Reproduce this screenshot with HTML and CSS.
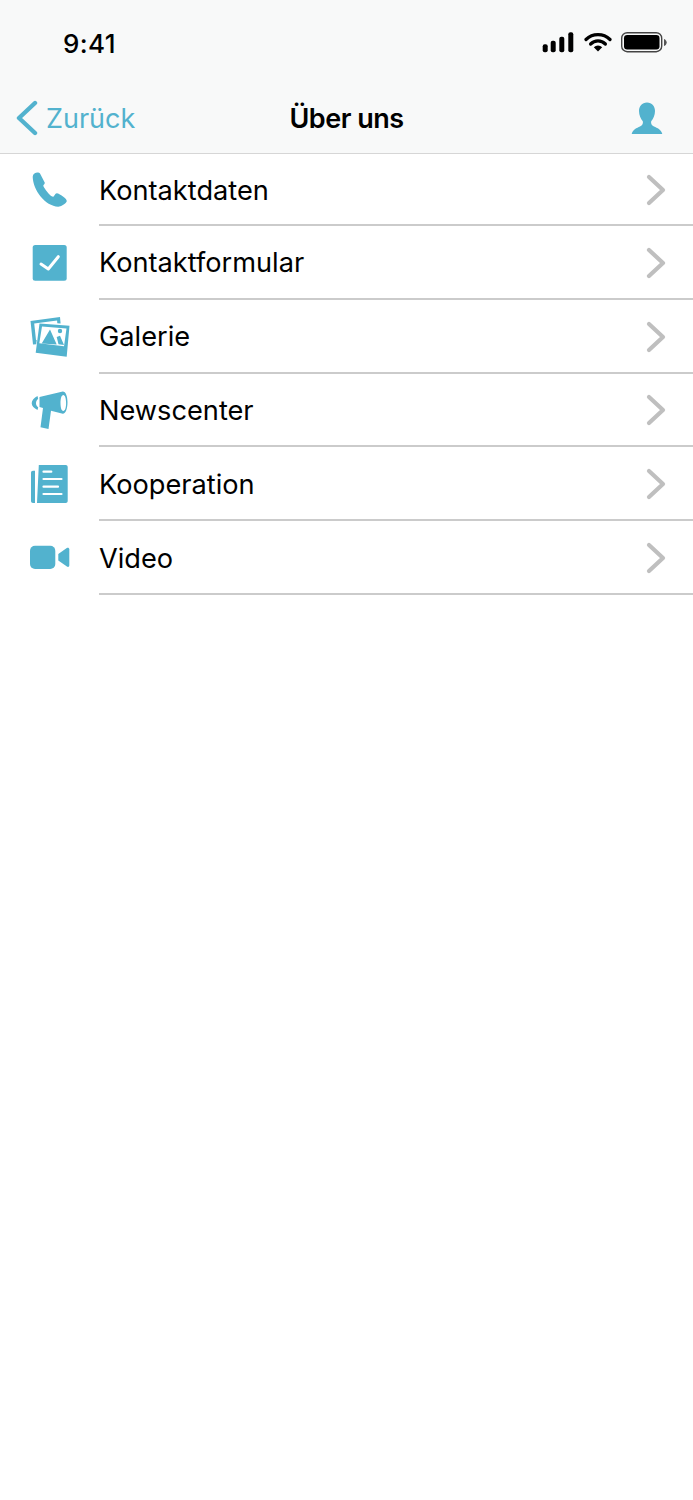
FILE: index.html
```html
<!DOCTYPE html>
<html lang="de">
<head>
    <meta charset="UTF-8">
    <title>Über uns</title>
    <link rel="stylesheet" href="styles.css">
</head>
<body>
    <header class="top">
        <div class="status">
            <span class="time">9:41</span>
            <div class="status-icons">
                <svg class="signal" viewBox="0 0 32 21" width="32" height="21">
                    <rect x="0.7" y="12.3" width="5" height="8" rx="2"/>
                    <rect x="8.7" y="8.7" width="5" height="11.6" rx="2"/>
                    <rect x="17.3" y="4.7" width="5" height="15.6" rx="2"/>
                    <rect x="26.3" y="0.3" width="5" height="20" rx="2"/>
                </svg>
                <svg class="wifi" viewBox="0 0 28 20" width="28" height="20">
                    <path d="M2 7.5a17 17 0 0 1 24 0" fill="none" stroke="#000" stroke-width="3.2" stroke-linecap="round"/>
                    <path d="M6.6 12a10.5 10.5 0 0 1 14.8 0" fill="none" stroke="#000" stroke-width="3.2" stroke-linecap="round"/>
                    <path d="M9.8 15.2a6 6 0 0 1 8.4 0L14 19.4z"/>
                </svg>
                <svg class="battery" viewBox="0 0 46 21" width="46" height="21">
                    <rect x="0.7" y="0.7" width="40" height="19" rx="5.5" fill="none" stroke="#444" stroke-width="1.4"/>
                    <rect x="3" y="3" width="35.5" height="14.5" rx="3.2"/>
                    <path d="M43 7v7c1.6-.5 2.700-2 2.700-3.500S44.600 7.500 43 7z" fill="#555"/>
                </svg>
            </div>
        </div>
        <nav class="nav">
            <a class="back" href="#">
                <svg viewBox="0 0 22 36" width="22" height="36">
                    <path d="M19 3 3 18l16 15" fill="none" stroke="#52b2ce" stroke-width="4.4" stroke-linecap="round" stroke-linejoin="round"/>
                </svg>
                <span>Zurück</span>
            </a>
            <h1 class="title">Über uns</h1>
            <a class="profile" href="#">
                <svg viewBox="0 0 32 33" width="32" height="33">
                    <path d="M16 .5c5 0 8 3.800 8 8.500 0 4-1.700 8-3.800 10.200-.5 2.300.2 4 2.800 5.300 3.300 1.600 7 2.600 8.300 7.500H.7c1.300-4.900 5-5.900 8.300-7.500 2.600-1.300 3.300-3 2.800-5.300C9.700 17 8 13 8 9c0-4.700 3-8.500 8-8.500z"/>
                </svg>
            </a>
        </nav>
    </header>

    <ul class="menu">
        <li class="row">
            <svg class="icon" viewBox="0 0 40 40" width="40" height="40">
                <path d="M2.700 6.700C3 20 15 36 28.300 36.700c2.500 0 7-2.500 8.400-5.200.4-1.500-1-3-3.400-4.800-2-1.500-5-3.400-6.600-3.400-1.500 0-2.500 3.400-3.400 3.400-1.500 0-3.500-1.500-5-3.400-1.800-2.200-5-6.500-5-7.500 0-1 1.500-1.500 1.500-3C12.300 8 11 5 10 3.500 8.500 1.500 3 2.500 2.700 6.700z"/>
            </svg>
            <span class="label">Kontaktdaten</span>
            <svg class="chev" viewBox="0 0 20 32" width="20" height="32"><path d="M3 3l14 13L3 29"/></svg>
        </li>
        <li class="row">
            <svg class="icon" viewBox="0 0 40 40" width="40" height="40">
                <rect x="2.7" y="2" width="34" height="35.7" rx="2.5"/>
                <path d="M11 21l7.300 5 10-12.300" fill="none" stroke="#fff" stroke-width="3" stroke-linecap="round" stroke-linejoin="round"/>
            </svg>
            <span class="label">Kontaktformular</span>
            <svg class="chev" viewBox="0 0 20 32" width="20" height="32"><path d="M3 3l14 13L3 29"/></svg>
        </li>
        <li class="row">
            <svg class="icon" viewBox="0 0 40 41" width="40" height="41">
                <path d="M.5 5 30 1l.6 6.500-3.300-.2-.2-2.900L4.200 7.400 6 24l.7-.1-.5 4.300-3.200.4z"/>
                <path fill-rule="evenodd" d="M9.500 7.500l30 2.300-2.800 31L5.700 36.700zM12 10.500l-2.700 16.800 24.700 3 2.500-17.800z"/>
                <path d="M11.700 27.500l8.300-14 6.700 15zM26.700 21l3.300-1.300 4 9.300-5.500-.7zM32.200 15a2.200 2.200 0 1 1-4.400 0 2.200 2.200 0 0 1 4.400 0z"/>
            </svg>
            <span class="label">Galerie</span>
            <svg class="chev" viewBox="0 0 20 32" width="20" height="32"><path d="M3 3l14 13L3 29"/></svg>
        </li>
        <li class="row">
            <svg class="icon" viewBox="0 0 40 40" width="40" height="40">
                <path fill-rule="evenodd" d="M9.500 7 32.800 1.500c3 0 4.700 4.800 4.700 10.800s-1.700 11.500-4.700 11.500L21 20.800 18.500 39l-8-1.700 2.500-19.300-3.500-1zM33.300 5c-1.800 0-2.800 3.600-2.800 8s1 8 2.800 8 2.800-3.600 2.800-8-1-8-2.800-8z"/>
                <path d="M7.500 6C4 8 1.700 10.500 1.700 13.300s2.300 5 5.800 6.700l.7-2.700C6.800 16.500 6 15 6 13.300s.8-3.300 2.200-4.500z"/>
            </svg>
            <span class="label">Newscenter</span>
            <svg class="chev" viewBox="0 0 20 32" width="20" height="32"><path d="M3 3l14 13L3 29"/></svg>
        </li>
        <li class="row">
            <svg class="icon" viewBox="0 0 40 40" width="40" height="40">
                <path d="M5 6.700v32.300H3c-1.200 0-2-.8-2-2V8.700c0-1.200.8-2 2-2zM8.800 1h27c1.100 0 1.900.8 1.900 1.900V37c0 1.100-.8 2-1.900 2H7z"/>
                <path d="M13.500 7.700h7.800M13.500 15h18M13.500 22.700h14.500M13.500 30h18" fill="none" stroke="#fff" stroke-width="2.200" stroke-linecap="round"/>
            </svg>
            <span class="label">Kooperation</span>
            <svg class="chev" viewBox="0 0 20 32" width="20" height="32"><path d="M3 3l14 13L3 29"/></svg>
        </li>
        <li class="row">
            <svg class="icon" viewBox="0 0 40 40" width="40" height="40">
                <rect x="0" y="7.7" width="25.3" height="23.3" rx="5"/>
                <path d="M28.300 16l8.500-6c1.300-.8 2.500 0 2.500 1.300v16c0 1.400-1.100 2.100-2.400 1.300L28.300 22.500z"/>
            </svg>
            <span class="label">Video</span>
            <svg class="chev" viewBox="0 0 20 32" width="20" height="32"><path d="M3 3l14 13L3 29"/></svg>
        </li>
    </ul>
</body>
</html>
```

FILE: styles.css
```css
html, body
{
    margin: 0;
    padding: 0;
    background: #fff;
    font-family: "Inter", "Liberation Sans", sans-serif;
    color: #000;
}

.top
{
    background: #f8f9f9;
    height: 153px;
    border-bottom: 1px solid #d6d6d6;
}

.status
{
    height: 84px;
    display: flex;
    justify-content: space-between;
    padding: 32px 26px 0 63px;
    box-sizing: border-box;
}

.time
{
    font-size: 26px;
    font-weight: 500;
    line-height: 24px;
    letter-spacing: 0.4px;
}

.status-icons
{
    display: flex;
    gap: 9.5px;
    align-items: flex-start;
}

.nav
{
    height: 68px;
    display: grid;
    grid-template-columns: 1fr auto 1fr;
    align-items: center;
    padding: 0 30px;
}

.back
{
    display: flex;
    align-items: center;
    gap: 8px;
    margin-left: -14px;
    color: #52b2ce;
    font-size: 27px;
    text-decoration: none;
}

.title
{
    margin: 0;
    font-size: 27px;
    font-weight: 600;
    letter-spacing: -0.5px;
}

.profile
{
    justify-self: end;
    display: flex;
    fill: #52b2ce;
}

.menu
{
    list-style: none;
    margin: 0;
    padding: 0;
}

.row
{
    height: 73.8px;
    display: flex;
    align-items: center;
    padding-left: 30px;
    position: relative;
}

.row:first-child
{
    height: 72px;
}

.row::after
{
    content: "";
    position: absolute;
    left: 99px;
    right: 0;
    bottom: 0;
    height: 2px;
    background: #cbcbcb;
}

.icon
{
    flex: none;
    fill: #52b2ce;
}

.label
{
    flex: 1;
    margin-left: 29px;
    font-size: 27.2px;
}

.chev
{
    flex: none;
    margin-right: 27px;
    fill: none;
    stroke: #bfbfbf;
    stroke-width: 4.2;
    stroke-linecap: round;
    stroke-linejoin: round;
}
```
